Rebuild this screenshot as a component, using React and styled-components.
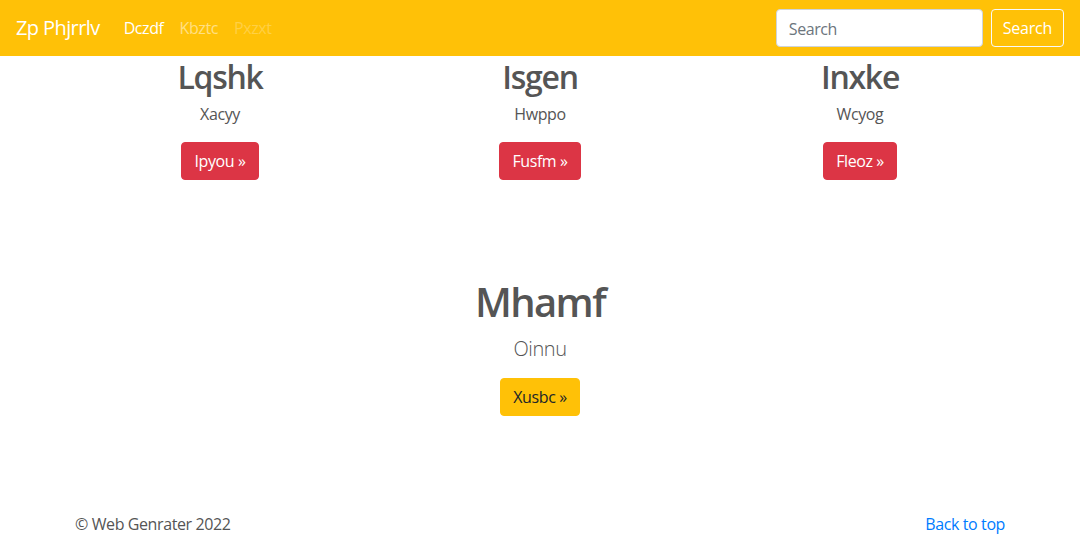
import React from "react";
import styled, { createGlobalStyle } from "styled-components";

const Global = createGlobalStyle`
  * { box-sizing: border-box; }
  body {
    margin: 0;
    font-family: "Segoe UI", "Open Sans", sans-serif;
    font-size: 16px;
    line-height: 1.5;
    letter-spacing: -0.025em;
    color: #555;
    background: #fff;
  }
`;

const Navbar = styled.nav`
  height: 56px;
  background: #ffc107;
  display: flex;
  align-items: center;
  padding: 8px 16px;
`;

const Brand = styled.a`
  font-size: 20px;
  letter-spacing: -0.03em;
  color: #fff;
  margin-right: 16px;
  text-decoration: none;
  line-height: 1.5;
`;

const NavList = styled.div`
  display: flex;
  flex: 1;
`;

const NavLink = styled.a`
  padding: 8px;
  text-decoration: none;
  color: ${(p) =>
    p.$state === "active"
      ? "#fff"
      : p.$state === "disabled"
      ? "rgba(255,255,255,.25)"
      : "rgba(255,255,255,.5)"};
`;

const SearchForm = styled.form`
  display: flex;
  align-items: center;
`;

const SearchInput = styled.input`
  width: 207px;
  height: 38px;
  padding: 7px 12px 5px;
  font: inherit;
  font-size: 16px;
  letter-spacing: -0.025em;
  color: #495057;
  border: 1px solid #ced4da;
  border-radius: 4px;
  margin-right: 8px;
  outline: none;
  &::placeholder { color: #6c757d; }
`;

const OutlineButton = styled.button`
  height: 38px;
  padding: 6px 11px;
  font: inherit;
  font-size: 16px;
  letter-spacing: -0.015em;
  color: #fff;
  background: transparent;
  border: 1px solid #f8f9fa;
  border-radius: 4px;
`;

const Container = styled.div`
  width: 960px;
  margin: 0 auto;
  padding: 0 15px;
`;

const Row = styled.div`
  display: grid;
  grid-template-columns: repeat(3, 1fr);
  margin: 0 -15px;
`;

const Col = styled.div`
  text-align: center;
  padding: 0 15px;
`;

const H2 = styled.h2`
  font-size: 32px;
  font-weight: 600;
  letter-spacing: -0.04em;
  line-height: 1.2;
  padding-top: 2px;
  margin: 0 0 6px;
`;

const Para = styled.p`
  margin: 0 0 16px;
`;

const Btn = styled.a`
  display: inline-block;
  padding: 6px 12px;
  font-size: 16px;
  line-height: 1.5;
  border-radius: 4px;
  text-decoration: none;
  color: ${(p) => (p.$variant === "warning" ? "#212529" : "#fff")};
  background: ${(p) => (p.$variant === "warning" ? "#ffc107" : "#dc3545")};
  border: 1px solid ${(p) => (p.$variant === "warning" ? "#ffc107" : "#dc3545")};
`;

const Hero = styled.section`
  text-align: center;
  margin-top: 82px;
`;

const H1 = styled.h1`
  font-size: 40px;
  font-weight: 600;
  letter-spacing: -0.04em;
  line-height: 1.2;
  margin: 0 0 8px;
`;

const Lead = styled.p`
  font-size: 20px;
  font-weight: 300;
  margin: 0 0 14px;
`;

const Footer = styled.footer`
  display: flex;
  justify-content: space-between;
  padding-top: 96px;
`;

const FooterLink = styled.a`
  color: #007bff;
  text-decoration: none;
`;

const columns = [
  { title: "Lqshk", text: "Xacyy", btn: "Ipyou" },
  { title: "Isgen", text: "Hwppo", btn: "Fusfm" },
  { title: "Inxke", text: "Wcyog", btn: "Fleoz" },
];

export default function App() {
  return (
    <>
      <Global />
      <Navbar>
        <Brand href="#">Zp Phjrrlv</Brand>
        <NavList>
          <NavLink $state="active" href="#">Dczdf</NavLink>
          <NavLink href="#">Kbztc</NavLink>
          <NavLink $state="disabled" href="#">Pxzxt</NavLink>
        </NavList>
        <SearchForm onSubmit={(e) => e.preventDefault()}>
          <SearchInput placeholder="Search" />
          <OutlineButton type="submit">Search</OutlineButton>
        </SearchForm>
      </Navbar>
      <Container>
        <Row>
          {columns.map((c) => (
            <Col key={c.title}>
              <H2>{c.title}</H2>
              <Para>{c.text}</Para>
              <Para>
                <Btn href="#">{c.btn} »</Btn>
              </Para>
            </Col>
          ))}
        </Row>
        <Hero>
          <H1>Mhamf</H1>
          <Lead>Oinnu</Lead>
          <Btn $variant="warning" href="#">Xusbc »</Btn>
        </Hero>
        <Footer>
          <span>© Web Genrater 2022</span>
          <FooterLink href="#">Back to top</FooterLink>
        </Footer>
      </Container>
    </>
  );
}
